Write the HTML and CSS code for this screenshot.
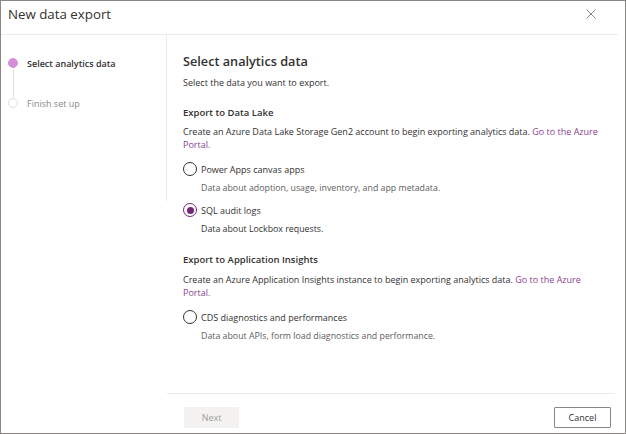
FILE: index.html
```html
<!DOCTYPE html>
<html>
<head>
<meta charset="utf-8">
<link rel="stylesheet" href="styles.css">
</head>
<body>
<div class="dialog">
  <div class="header">
    <div class="title">New data export</div>
    <button class="close" aria-label="Close">
      <svg width="10" height="10" viewBox="0 0 10 10"><path d="M0.5 0.5L9.5 9.5M9.5 0.5L0.5 9.5" stroke="#8a8886" stroke-width="1" fill="none"/></svg>
    </button>
  </div>
  <div class="body">
    <nav class="nav">
      <div class="step active"><span class="dot"></span><span class="step-label">Select analytics data</span></div>
      <div class="connector"></div>
      <div class="step"><span class="dot"></span><span class="step-label">Finish set up</span></div>
    </nav>
    <main class="main">
      <div class="content">
        <h1 class="heading">Select analytics data</h1>
        <p class="sub">Select the data you want to export.</p>

        <h2 class="section">Export to Data Lake</h2>
        <p class="desc">Create an Azure Data Lake Storage Gen2 account to begin exporting analytics data. <a class="link">Go to the Azure</a><br><a class="link">Portal.</a></p>

        <div class="option first">
          <div class="radio-row"><span class="radio"></span><span class="radio-label">Power Apps canvas apps</span></div>
          <div class="opt-desc">Data about adoption, usage, inventory, and app metadata.</div>
        </div>
        <div class="option">
          <div class="radio-row"><span class="radio checked"></span><span class="radio-label">SQL audit logs</span></div>
          <div class="opt-desc dark">Data about Lockbox requests.</div>
        </div>

        <h2 class="section s2">Export to Application Insights</h2>
        <p class="desc d2">Create an Azure Application Insights instance to begin exporting analytics data. <a class="link">Go to the Azure</a><br><a class="link">Portal.</a></p>

        <div class="option first">
          <div class="radio-row"><span class="radio"></span><span class="radio-label">CDS diagnostics and performances</span></div>
          <div class="opt-desc">Data about APIs, form load diagnostics and performance.</div>
        </div>
      </div>
      <div class="footer">
        <button class="btn next" disabled>Next</button>
        <button class="btn cancel">Cancel</button>
      </div>
    </main>
  </div>
</div>
</body>
</html>
```

FILE: styles.css
```css
* { box-sizing: border-box; }
html, body { margin: 0; padding: 0; }
body {
  width: 626px;
  height: 434px;
  font-family: "Open Sans", "Noto Sans", sans-serif;
  color: #323130;
  background: #fff;
}
.dialog {
  width: 626px;
  height: 434px;
  border: 1px solid #8a8886;
  display: flex;
  flex-direction: column;
}
.header {
  height: 34px;
  flex: none;
  border-bottom: 1px solid #edebe9;
  margin-right: 7px;
  display: flex;
  align-items: center;
  justify-content: space-between;
  padding-left: 7px;
}
.title {
  font-size: 13.3px;
  line-height: 18px;
  margin-top: -8px;
}
.close {
  border: 0;
  background: none;
  padding: 0;
  width: 16px;
  height: 16px;
  display: flex;
  align-items: center;
  justify-content: center;
  margin-right: 19px;
  margin-top: -7px;
}
.body {
  flex: 1;
  display: flex;
  min-height: 0;
}
.nav {
  width: 166px;
  flex: none;
  height: 166px;
  border-right: 1px solid #edebe9;
  padding: 22px 0 0 7px;
}
.step {
  display: flex;
  align-items: center;
  height: 12px;
}
.dot {
  width: 10px;
  height: 10px;
  border-radius: 50%;
  border: 1px solid #e1dfdd;
  background: #fff;
  flex: none;
}
.step.active .dot {
  background: #d58fda;
  border-color: #d58fda;
}
.step-label {
  font-size: 9px;
  margin-left: 9px;
  color: #8a8886;
}
.step.active .step-label {
  color: #323130;
  font-weight: 600;
}
.connector {
  width: 1px;
  height: 28px;
  background: #e1dfdd;
  margin-left: 5px;
}
.main {
  flex: 1;
  display: flex;
  flex-direction: column;
  min-width: 0;
}
.content {
  flex: 1;
  padding: 17px 16px 0 16px;
}
.heading {
  margin: 0;
  font-size: 12.7px;
  font-weight: 600;
  line-height: 18px;
}
.sub {
  margin: 6px 0 0;
  font-size: 9px;
  line-height: 13px;
}
.section {
  margin: 17px 0 0;
  font-size: 9.5px;
  font-weight: 600;
  line-height: 13px;
}
.section.s2 { margin-top: 17px; }
.desc {
  margin: 6px 0 0;
  font-size: 9px;
  line-height: 13px;
}
.desc.d2 { margin-top: 7px; }
.link {
  color: #8b3f91;
  text-decoration: none;
}
.option { margin-top: 8px; }
.option.first { margin-top: 11px; }
.radio-row {
  display: flex;
  align-items: center;
  height: 14px;
}
.radio {
  width: 14px;
  height: 14px;
  border-radius: 50%;
  border: 1px solid #323130;
  flex: none;
  display: flex;
  align-items: center;
  justify-content: center;
}
.radio.checked { border-color: #742774; }
.radio.checked::after {
  content: "";
  width: 7px;
  height: 7px;
  border-radius: 50%;
  background: #742774;
}
.radio-label {
  font-size: 9px;
  margin-left: 4px;
}
.opt-desc {
  margin: 6px 0 0 18px;
  font-size: 8.8px;
  line-height: 13px;
  color: #605e5c;
}
.opt-desc.dark { color: #323130; }
.footer {
  flex: none;
  height: 40px;
  margin-right: 10px;
  border-top: 1px solid #edebe9;
  display: flex;
  align-items: flex-start;
  justify-content: space-between;
  padding: 13px 4px 0 17px;
}
.btn {
  height: 21px;
  font-family: inherit;
  font-size: 9px;
  border-radius: 1px;
  padding: 0;
}
.next {
  width: 55px;
  background: #f3f2f1;
  color: #a19f9d;
  border: 0;
}
.cancel {
  width: 57px;
  background: #fff;
  color: #323130;
  border: 1px solid #8a8886;
}
```
